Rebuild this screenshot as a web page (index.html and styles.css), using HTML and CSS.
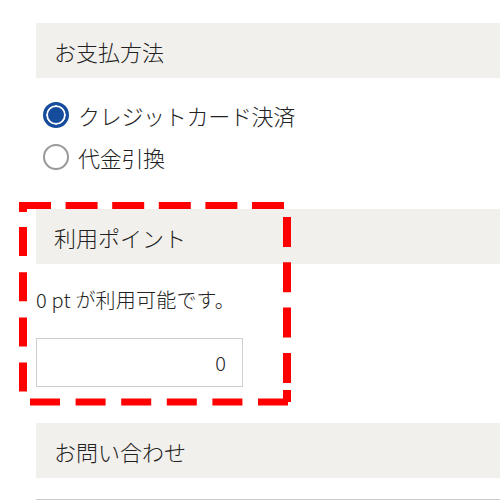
FILE: index.html
```html
<!DOCTYPE html>
<html>
<head>
    <meta charset="utf-8">
    <meta name="viewport" content="width=device-width, initial-scale=1.0">
    <title>お支払方法</title>
    <link rel="stylesheet" href="styles.css">
</head>
<body>
    <div class="page">
        <h2 class="section-title">お支払方法</h2>
        <div class="pay-list">
            <label class="pay-item">
                <input type="radio" name="pay" class="radio" checked>
                <span>クレジットカード決済</span>
            </label>
            <label class="pay-item">
                <input type="radio" name="pay" class="radio">
                <span>代金引換</span>
            </label>
        </div>

        <h2 class="section-title mt-31">利用ポイント</h2>
        <p class="point-note">0 pt が利用可能です。</p>
        <input type="text" class="point-input" value="0">

        <h2 class="section-title mt-36">お問い合わせ</h2>
        <div class="inquiry-box"></div>

        <!-- 強調用の赤い点線枠 -->
        <svg class="mark" width="500" height="500" viewBox="0 0 500 500">
            <g stroke="#ff0000" fill="none">
                <line x1="19" y1="205.5" x2="284" y2="205.5" stroke-width="7" stroke-dasharray="32 14.6"/>
                <line x1="23" y1="202" x2="23" y2="212" stroke-width="8"/>
                <line x1="23" y1="227" x2="23" y2="392" stroke-width="8" stroke-dasharray="29 16.2"/>
                <line x1="287" y1="217" x2="287" y2="384" stroke-width="8" stroke-dasharray="30 15.3"/>
                <line x1="287" y1="390" x2="287" y2="402" stroke-width="8"/>
                <line x1="30" y1="402" x2="291" y2="402" stroke-width="7" stroke-dasharray="30 15.6"/>
            </g>
        </svg>
    </div>
</body>
</html>
```

FILE: styles.css
```css
html, body {
    margin: 0;
    padding: 0;
    background: #fff;
}
body {
    font-family: "Noto Sans CJK JP", "Noto Sans", sans-serif;
    font-weight: 300;
    color: #222;
    height: 500px;
    overflow: hidden;
}
.page {
    position: relative;
    padding: 23px 0 0 36px;
    height: 477px;
    overflow: hidden;
}
.section-title {
    margin: 0;
    height: 55px;
    line-height: 57px;
    padding-left: 18px;
    font-size: 22px;
    font-weight: 300;
    background: #f2f0ec;
}
.mt-31 {
    margin-top: 31px;
}
.mt-36 {
    margin-top: 36px;
}
.pay-list {
    margin-top: 16px;
}
.pay-item {
    display: flex;
    align-items: center;
    height: 42px;
    font-size: 22px;
    letter-spacing: -0.3px;
}
.radio {
    appearance: none;
    -webkit-appearance: none;
    box-sizing: border-box;
    width: 26px;
    height: 26px;
    margin: 0 9px 0 7px;
    border: 2px solid #999;
    border-radius: 50%;
    background: #fff;
}
.radio:checked {
    border: 3px solid #164c9c;
    background: #164c9c;
    box-shadow: inset 0 0 0 2px #fff;
}
.point-note {
    margin: 21px 0 0;
    height: 30px;
    line-height: 30px;
    font-size: 20px;
    letter-spacing: 0.2px;
}
.point-input {
    display: block;
    box-sizing: border-box;
    margin-top: 23px;
    width: 207px;
    height: 49px;
    padding: 0 16px 0 8px;
    border: 1px solid #cfcfcf;
    text-align: right;
    font-family: inherit;
    font-weight: 300;
    font-size: 20px;
    color: #222;
    outline: none;
}
.inquiry-box {
    margin-top: 21px;
    height: 1px;
    border-top: 1px solid #cccccc;
}
.mark {
    position: absolute;
    top: 0;
    left: 0;
    pointer-events: none;
}
```
